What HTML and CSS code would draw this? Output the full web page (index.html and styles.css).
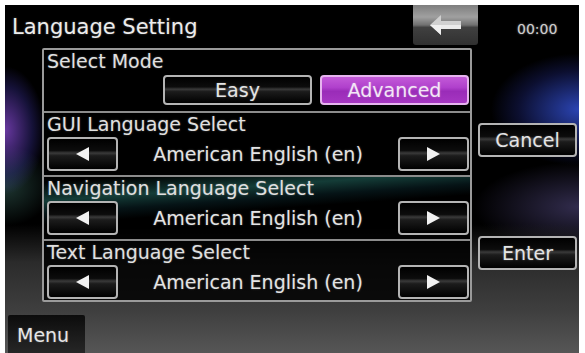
FILE: index.html
```html
<!DOCTYPE html>
<html lang="en">
<head>
    <meta charset="UTF-8">
    <meta name="viewport" content="width=device-width, initial-scale=1.0">
    <title>Language Setting</title>
    <link rel="stylesheet" href="styles.css">
</head>
<body>
    <div class="screen">
        <header class="topbar">
            <h1 class="title">Language Setting</h1>
            <button class="back-btn" aria-label="Back">
                <svg width="34" height="22" viewBox="0 0 34 22">
                    <polygon points="1,11 12,1 12,7 32,7 32,15 12,15 12,21" fill="#d0d0d0"/>
                    <polygon points="1,11 12,11 12,21" fill="#efefef"/>
                    <rect x="12" y="11" width="20" height="4" fill="#ebebeb"/>
                </svg>
            </button>
            <span class="clock">00:00</span>
        </header>

        <main class="main">
            <div class="panel">
                <section class="row row-mode">
                    <div class="row-label">Select Mode</div>
                    <div class="mode-buttons">
                        <button class="btn mode-btn">Easy</button>
                        <button class="btn mode-btn active">Advanced</button>
                    </div>
                </section>

                <section class="row">
                    <div class="row-label">GUI Language Select</div>
                    <div class="lang-select">
                        <button class="btn arrow-btn"><span class="tri tri-left"></span></button>
                        <span class="lang-value">American English (en)</span>
                        <button class="btn arrow-btn"><span class="tri tri-right"></span></button>
                    </div>
                </section>

                <section class="row row-nav">
                    <div class="row-label">Navigation Language Select</div>
                    <div class="lang-select">
                        <button class="btn arrow-btn"><span class="tri tri-left"></span></button>
                        <span class="lang-value">American English (en)</span>
                        <button class="btn arrow-btn"><span class="tri tri-right"></span></button>
                    </div>
                </section>

                <section class="row row-last">
                    <div class="row-label">Text Language Select</div>
                    <div class="lang-select">
                        <button class="btn arrow-btn"><span class="tri tri-left"></span></button>
                        <span class="lang-value">American English (en)</span>
                        <button class="btn arrow-btn"><span class="tri tri-right"></span></button>
                    </div>
                </section>
            </div>

            <div class="side">
                <button class="btn side-btn cancel">Cancel</button>
                <button class="btn side-btn enter">Enter</button>
            </div>
        </main>

        <footer class="bottombar">
            <button class="menu-tab">Menu</button>
        </footer>
    </div>
</body>
</html>
```

FILE: styles.css
```css
html, body {
    margin: 0;
    padding: 0;
    background-color: #fff;
}

body {
    width: 585px;
    height: 353px;
    overflow: hidden;
    padding: 5px 6px 0 5px;
    box-sizing: border-box;
    font-family: "DejaVu Sans", Verdana, sans-serif;
    color: #e2e2e2;
}

.screen {
    width: 574px;
    height: 348px;
    display: flex;
    flex-direction: column;
    background-color: #000;
    background-image:
        linear-gradient(180deg, rgba(0, 0, 0, 0) 63%, #2b2b2b 74%, #3f3f3f 88%, #565656 100%),
        radial-gradient(ellipse 110px 70px at 100% 30%, rgba(50, 80, 210, 0.85), rgba(40, 50, 160, 0.3) 55%, rgba(0, 0, 0, 0) 80%),
        radial-gradient(ellipse 140px 60px at 100% 58%, rgba(90, 80, 140, 0.55), rgba(0, 0, 0, 0) 75%),
        radial-gradient(ellipse 50px 80px at 0% 36%, rgba(130, 70, 200, 0.8), rgba(60, 50, 160, 0.35) 55%, rgba(0, 0, 0, 0) 80%),
        radial-gradient(ellipse 60px 50px at 0% 52%, rgba(60, 110, 100, 0.5), rgba(0, 0, 0, 0) 80%);
}

button {
    font-family: inherit;
    color: inherit;
    cursor: pointer;
}

/* top bar */
.topbar {
    height: 43px;
    display: flex;
    align-items: flex-start;
    flex-shrink: 0;
}

.title {
    margin: 0;
    padding: 9px 0 0 7px;
    font-size: 21px;
    font-weight: normal;
    line-height: 26px;
    color: #ececec;
    text-shadow: 0 0 2px rgba(255, 255, 255, 0.35);
    width: 401px;
}

.back-btn {
    width: 65px;
    height: 40px;
    border: none;
    padding: 0;
    display: flex;
    align-items: center;
    justify-content: center;
    background: linear-gradient(180deg, #7e7e7e 0%, #a0a0a0 30%, #707070 50%, #404040 56%, #303030 100%);
    border-radius: 0 0 3px 3px;
}

.clock {
    flex: 1;
    padding: 16px 0 0 39px;
    font-size: 14px;
    color: #cfcfcf;
    text-shadow: 0 0 2px rgba(255, 255, 255, 0.5);
}

/* main area */
.main {
    display: flex;
    padding-left: 37px;
    gap: 6px;
    height: 254px;
    flex-shrink: 0;
}

.panel {
    width: 430px;
    height: 254px;
    box-sizing: border-box;
    border: 2px solid #9a9a9a;
    border-radius: 2px;
    background-color: rgba(0, 0, 0, 0.82);
    display: flex;
    flex-direction: column;
}

.row {
    height: 64px;
    box-sizing: border-box;
    border-top: 2px solid #8c8c8c;
    padding: 0 1px 0 3px;
}

.row-mode {
    height: 61px;
    border-top: none;
}

.row-last {
    height: 61px;
}

.row-nav {
    background-image: linear-gradient(176deg, rgba(0, 0, 0, 0) 6%, rgba(40, 120, 110, 0.5) 26%, rgba(20, 70, 80, 0.28) 40%, rgba(0, 0, 0, 0) 52%);
}

.row-label {
    font-size: 19px;
    line-height: 22px;
    height: 22px;
    white-space: nowrap;
    color: #e0e0e0;
    text-shadow: 0 0 2px rgba(255, 255, 255, 0.3);
}

.mode-buttons {
    display: flex;
    justify-content: flex-end;
    gap: 8px;
    margin-top: 3px;
}

.btn {
    box-sizing: border-box;
    border: 2px solid #b4b4b4;
    border-radius: 4px;
    background: linear-gradient(180deg, #000 0%, #0c0c0c 38%, #3a3a3a 47%, #1c1c1c 56%, #000 100%);
    font-size: 19px;
    padding: 0;
    color: #e4e4e4;
    text-shadow: 0 0 2px rgba(255, 255, 255, 0.3);
}

.mode-btn {
    width: 149px;
    height: 30px;
    line-height: 24px;
}

.mode-btn.active {
    border-color: #e6b4ee;
    background: linear-gradient(180deg, #c35ad8 0%, #b040cc 40%, #9a2cb8 55%, #a636c2 100%);
    color: #f3e6f6;
}

.lang-select {
    display: flex;
    align-items: center;
    margin-top: 2px;
}

.arrow-btn {
    width: 71px;
    height: 34px;
    display: flex;
    align-items: center;
    justify-content: center;
    flex-shrink: 0;
}

.lang-value {
    flex: 1;
    text-align: center;
    font-size: 19px;
    white-space: nowrap;
    color: #e4e4e4;
    text-shadow: 0 0 2px rgba(255, 255, 255, 0.3);
}

.tri {
    width: 0;
    height: 0;
    border-top: 7px solid transparent;
    border-bottom: 7px solid transparent;
}

.tri-left {
    border-right: 13px solid #f2f2f2;
}

.tri-right {
    border-left: 13px solid #f2f2f2;
}

/* side buttons */
.side {
    display: flex;
    flex-direction: column;
    width: 99px;
}

.side-btn {
    width: 99px;
    height: 34px;
    line-height: 28px;
}

.cancel {
    margin-top: 75px;
}

.enter {
    margin-top: 79px;
}

/* bottom bar */
.bottombar {
    margin-top: 13px;
    padding-left: 3px;
}

.menu-tab {
    width: 77px;
    height: 38px;
    border: none;
    padding: 2px 0 0 9px;
    text-align: left;
    font-size: 19px;
    color: #e6e6e6;
    text-shadow: 0 0 2px rgba(255, 255, 255, 0.3);
    background: linear-gradient(180deg, #0c0c0c 0%, #1c1c1c 60%, #262626 100%);
    border-radius: 2px 2px 0 0;
}
```
